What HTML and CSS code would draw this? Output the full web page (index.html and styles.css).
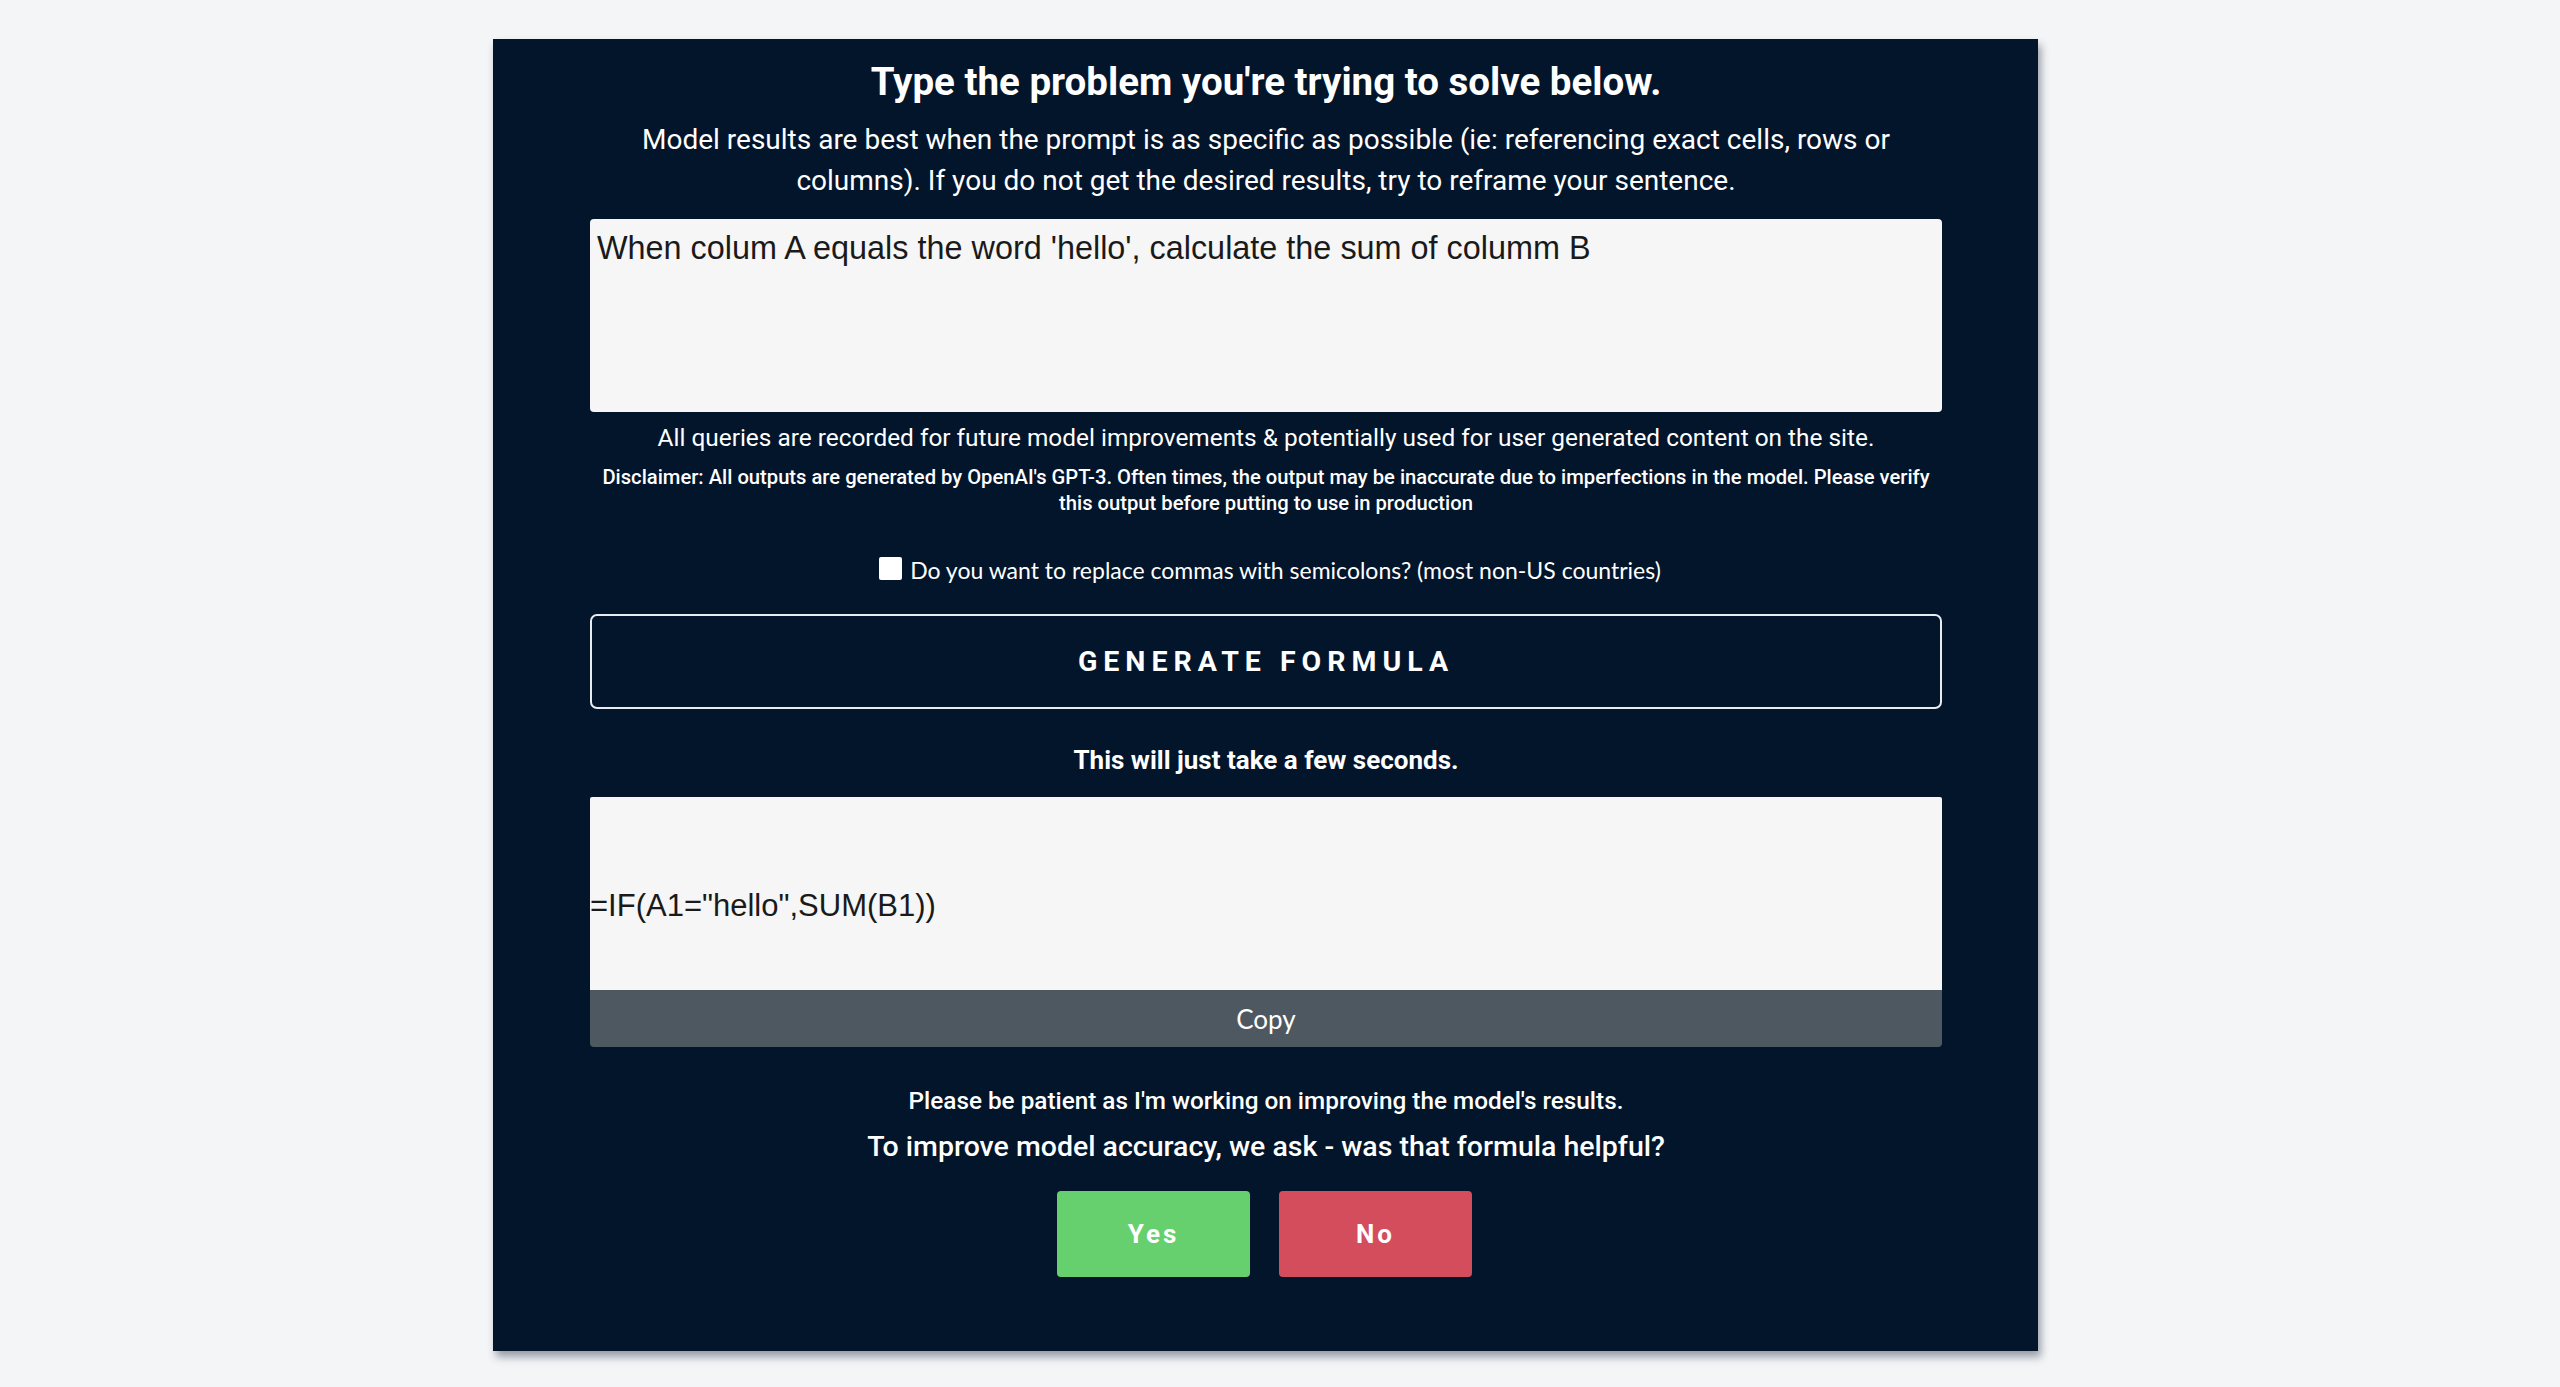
FILE: index.html
```html
<!DOCTYPE html>
<html lang="en">
<head>
<meta charset="utf-8">
<title>Formula generator</title>
<link rel="stylesheet" href="styles.css">
</head>
<body>
<main class="panel">
  <h1 class="title">Type the problem you're trying to solve below.</h1>
  <p class="intro">Model results are best when the prompt is as specific as possible (ie: referencing exact cells, rows or columns). If you do not get the desired results, try to reframe your sentence.</p>
  <textarea class="prompt">When colum A equals the word 'hello', calculate the sum of columm B</textarea>
  <p class="notice">All queries are recorded for future model improvements &amp; potentially used for user generated content on the site.</p>
  <p class="disclaimer">Disclaimer: All outputs are generated by OpenAI's GPT-3. Often times, the output may be inaccurate due to imperfections in the model. Please verify this output before putting to use in production</p>
  <label class="check-row"><input type="checkbox" class="check"><span>Do you want to replace commas with semicolons? (most non-US countries)</span></label>
  <button class="generate">GENERATE FORMULA</button>
  <p class="wait">This will just take a few seconds.</p>
  <div class="output">=IF(A1="hello",SUM(B1))</div>
  <button class="copy">Copy</button>
  <p class="patient">Please be patient as I'm working on improving the model's results.</p>
  <p class="ask">To improve model accuracy, we ask - was that formula helpful?</p>
  <div class="feedback">
    <button class="fb yes">Yes</button>
    <button class="fb no">No</button>
  </div>
</main>
</body>
</html>
```
FILE: styles.css
```css
html, body {
  margin: 0;
  padding: 0;
  background: #f4f5f7;
}
body {
  padding-top: 39px;
  padding-bottom: 35px;
}
.panel {
  box-sizing: border-box;
  width: 1545px;
  margin-left: 493px;
  background: #02152b;
  color: #ffffff;
  font-family: Roboto, "Liberation Sans", sans-serif;
  padding: 21px 96px 74px 97px;
  display: flex;
  flex-direction: column;
  align-items: stretch;
  box-shadow: 3px 6px 8px rgba(40, 50, 70, 0.45);
}
.panel p, .panel h1 { margin: 0; text-align: center; }
.title {
  font-size: 38.5px;
  font-weight: 700;
  line-height: 44px;
}
.intro {
  margin-top: 15px !important;
  font-size: 28px;
  line-height: 41px;
}
.prompt {
  margin-top: 18px;
  box-sizing: border-box;
  height: 193px;
  width: 100%;
  resize: none;
  border: none;
  border-radius: 4px;
  background: #f6f6f6;
  color: #1a1a1a;
  font-family: "Liberation Sans", Arial, sans-serif;
  font-size: 32.4px;
  line-height: 36px;
  padding: 11px 7px;
  outline: none;
  display: block;
}
.notice {
  margin-top: 11px !important;
  font-size: 24.4px;
  line-height: 30px;
}
.disclaimer {
  margin-top: 11px !important;
  font-size: 20.2px;
  font-weight: 500;
  line-height: 26px;
}
.check-row {
  margin-top: 39px;
  display: flex;
  justify-content: center;
  align-items: center;
  gap: 8px;
  font-family: Lato, "Noto Sans", sans-serif;
  font-size: 23px;
  line-height: 30px;
}
.check {
  appearance: none;
  -webkit-appearance: none;
  width: 23px;
  height: 23px;
  margin: 0 0 4px 8px;
  background: #ffffff;
  border-radius: 2px;
  border: none;
}
.generate {
  margin-top: 29px;
  height: 95px;
  background: transparent;
  border: 2px solid #e8ecef;
  border-radius: 7px;
  color: #ffffff;
  font-family: Roboto, "Liberation Sans", sans-serif;
  font-size: 28.5px;
  font-weight: 700;
  letter-spacing: 6px;
}
.wait {
  margin-top: 36px !important;
  font-size: 26px;
  font-weight: 700;
  line-height: 30px;
}
.output {
  margin-top: 22px;
  height: 193px;
  box-sizing: border-box;
  background: #f6f6f6;
  color: #1a1a1a;
  font-family: "Liberation Sans", Arial, sans-serif;
  font-size: 31px;
  display: flex;
  align-items: center;
  padding-top: 24px;
  border-radius: 2px 2px 0 0;
}
.copy {
  height: 57px;
  border: none;
  background: #4e5860;
  color: #ffffff;
  font-family: Lato, "Noto Sans", sans-serif;
  font-size: 26px;
  border-radius: 0 0 4px 4px;
}
.patient {
  margin-top: 39px !important;
  font-size: 24.3px;
  font-weight: 500;
  line-height: 30px;
}
.ask {
  margin-top: 14px !important;
  font-size: 28.5px;
  font-weight: 500;
  line-height: 34px;
}
.feedback {
  margin-top: 27px;
  display: flex;
  justify-content: center;
  gap: 29px;
}
.fb {
  width: 193px;
  height: 86px;
  border: none;
  border-radius: 4px;
  color: #ffffff;
  font-family: Roboto, "Liberation Sans", sans-serif;
  font-size: 26px;
  font-weight: 700;
  letter-spacing: 3px;
}
.yes { background: #66d06e; margin-left: -3px; }
.no { background: #d34d5c; }
```
